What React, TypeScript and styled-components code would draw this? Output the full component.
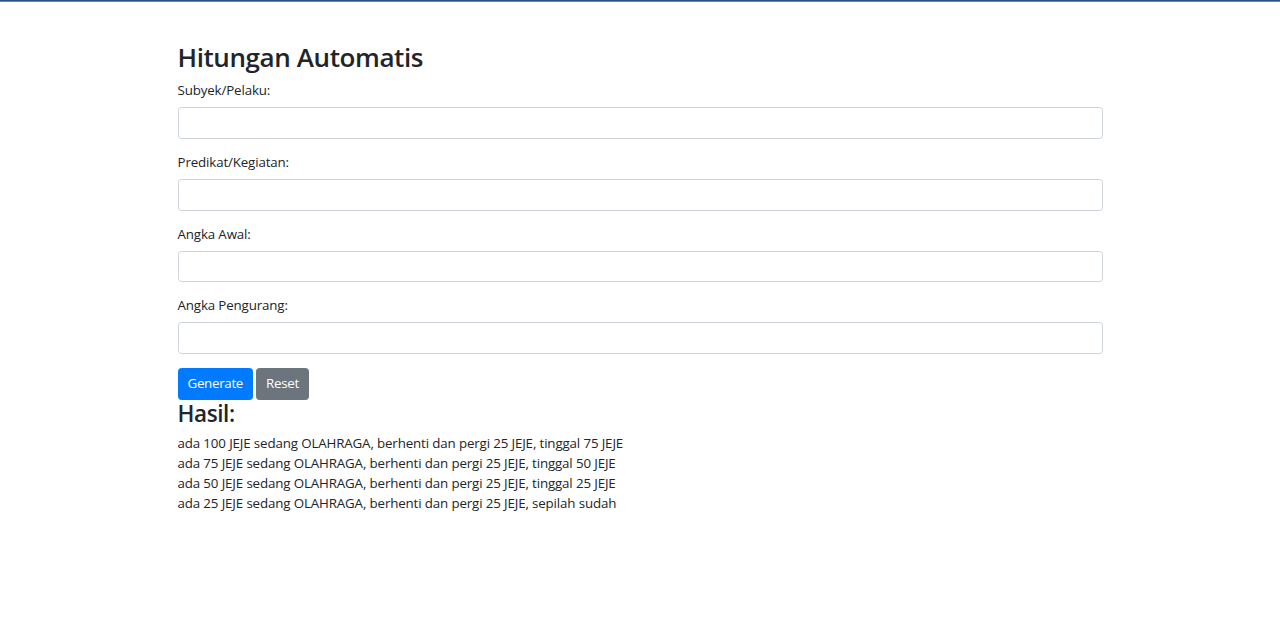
import React from "react";
import styled, { createGlobalStyle } from "styled-components";

const Global = createGlobalStyle`
  * { box-sizing: border-box; }
  html, body { margin: 0; padding: 0; background: #fff; }
  body {
    font-family: "Segoe UI", "Open Sans", "Noto Sans", sans-serif;
    font-size: 13.33px;
    line-height: 1.5;
    letter-spacing: -0.14px;
    color: #212529;
  }
`;

const TopBar = styled.div`
  height: 2px;
  background: linear-gradient(#2c4f8c 0 1px, #5b86c6 1px 2px);
`;

const Container = styled.div`
  width: 925px;
  margin: 40px auto 0;
`;

const Title = styled.h1`
  margin: 0 0 8px;
  font-size: 26px;
  font-weight: 600;
  letter-spacing: -0.4px;
  line-height: 1.2;
`;

const Group = styled.div`
  margin-bottom: 14px;
`;

const Label = styled.label`
  display: block;
  margin-bottom: 6px;
  font-size: 13.33px;
`;

const Input = styled.input`
  display: block;
  width: 100%;
  height: 31.7px;
  padding: 5px 10px;
  font: inherit;
  color: #495057;
  background: #fff;
  border: 1px solid #ced4da;
  border-radius: 3.33px;
  outline: none;
`;

const Buttons = styled.div`
  display: flex;
  gap: 3px;
`;

const Button = styled.button<{ $variant: "primary" | "secondary" }>`
  height: 31.7px;
  padding: 0 9px;
  font: inherit;
  letter-spacing: -0.3px;
  color: #fff;
  border: 1px solid ${(p) => (p.$variant === "primary" ? "#007bff" : "#6c757d")};
  background: ${(p) => (p.$variant === "primary" ? "#007bff" : "#6c757d")};
  border-radius: 3.33px;
  cursor: pointer;
`;

const ResultTitle = styled.h3`
  margin: 0 0 6px;
  font-size: 22.5px;
  font-weight: 600;
  letter-spacing: -0.4px;
  line-height: 1.2;
`;

const Line = styled.div`
  line-height: 20px;
`;

const fields = ["Subyek/Pelaku:", "Predikat/Kegiatan:", "Angka Awal:", "Angka Pengurang:"];

const results = [
  "ada 100 JEJE sedang OLAHRAGA, berhenti dan pergi 25 JEJE, tinggal 75 JEJE",
  "ada 75 JEJE sedang OLAHRAGA, berhenti dan pergi 25 JEJE, tinggal 50 JEJE",
  "ada 50 JEJE sedang OLAHRAGA, berhenti dan pergi 25 JEJE, tinggal 25 JEJE",
  "ada 25 JEJE sedang OLAHRAGA, berhenti dan pergi 25 JEJE, sepilah sudah",
];

export default function App() {
  return (
    <>
      <Global />
      <TopBar />
      <Container>
        <Title>Hitungan Automatis</Title>
        {fields.map((f) => (
          <Group key={f}>
            <Label>{f}</Label>
            <Input type="text" />
          </Group>
        ))}
        <Buttons>
          <Button $variant="primary">Generate</Button>
          <Button $variant="secondary">Reset</Button>
        </Buttons>
        <ResultTitle>Hasil:</ResultTitle>
        {results.map((r) => (
          <Line key={r}>{r}</Line>
        ))}
      </Container>
    </>
  );
}
